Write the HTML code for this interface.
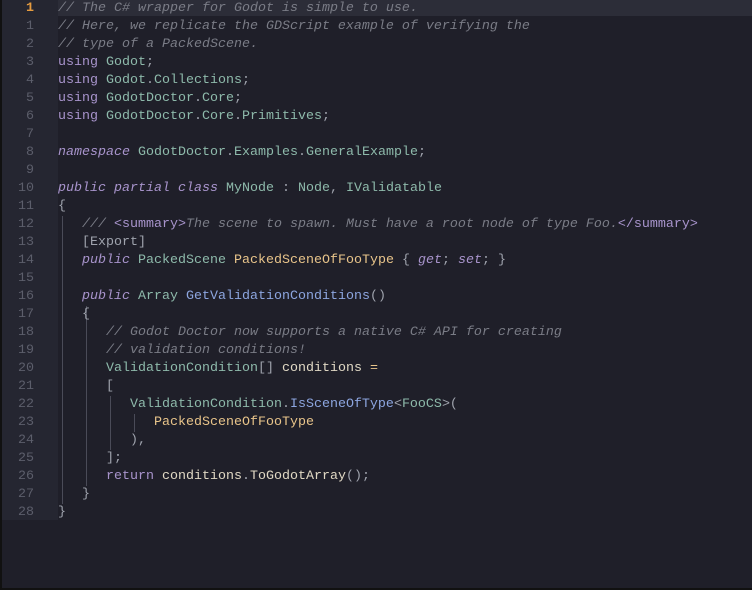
<!DOCTYPE html>
<html><head><style>
body{margin:0;width:752px;height:590px;background:#1e1f28;overflow:hidden;position:relative;font-family:"Liberation Mono",monospace;font-size:13.33px}
#frame{position:absolute;left:0;top:0;width:750px;height:588px;border-left:2px solid #111;border-bottom:2px solid #111;background:#1f1f29}
#gut{position:absolute;left:2px;top:0;width:56px;height:520px;background:#252631}
#hl{position:absolute;left:58px;top:0;width:694px;height:16px;background:#2c2d38}
.n{position:absolute;left:0;width:34px;text-align:right;color:#5c5e6b;height:18px;line-height:18px}
.n.c{color:#e59b3f;font-weight:bold}
.l{position:absolute;left:58px;white-space:pre;height:18px;line-height:18px;color:#9fa3ad}
.g{position:absolute;width:1px;background:#4a4b58}
.cm{color:#7a7c86;font-style:italic}
.kw{color:#a894cc;font-style:italic}
.ku{color:#a894cc}
.ty{color:#8ebaab}
.pr{color:#e8c48a}
.fn{color:#8da6e0}
.vr{color:#e0d8c4}
.tg{color:#a894cc}
</style></head><body>
<div id="frame"></div>
<div id="gut"></div>
<div id="hl"></div>
<div class="g" style="left:62px;top:216px;height:288px"></div>
<div class="g" style="left:86px;top:306px;height:180px"></div>
<div class="g" style="left:110px;top:396px;height:54px"></div>
<div class="g" style="left:134px;top:414px;height:18px"></div>
<div id="c"></div>
<script>
const L=[
'<span class="cm">// The C# wrapper for Godot is simple to use.</span>',
'<span class="cm">// Here, we replicate the GDScript example of verifying the</span>',
'<span class="cm">// type of a PackedScene.</span>',
'<span class="ku">using</span> <span class="ty">Godot</span>;',
'<span class="ku">using</span> <span class="ty">Godot</span>.<span class="ty">Collections</span>;',
'<span class="ku">using</span> <span class="ty">GodotDoctor</span>.<span class="ty">Core</span>;',
'<span class="ku">using</span> <span class="ty">GodotDoctor</span>.<span class="ty">Core</span>.<span class="ty">Primitives</span>;',
'',
'<span class="kw">namespace</span> <span class="ty">GodotDoctor</span>.<span class="ty">Examples</span>.<span class="ty">GeneralExample</span>;',
'',
'<span class="kw">public partial class</span> <span class="ty">MyNode</span> : <span class="ty">Node</span>, <span class="ty">IValidatable</span>',
'{',
'   <span class="cm">///</span> <span class="tg">&lt;summary&gt;</span><span class="cm">The scene to spawn. Must have a root node of type Foo.</span><span class="tg">&lt;/summary&gt;</span>',
'   [Export]',
'   <span class="kw">public</span> <span class="ty">PackedScene</span> <span class="pr">PackedSceneOfFooType</span> { <span class="kw">get</span>; <span class="kw">set</span>; }',
'',
'   <span class="kw">public</span> <span class="ty">Array</span> <span class="fn">GetValidationConditions</span>()',
'   {',
'      <span class="cm">// Godot Doctor now supports a native C# API for creating</span>',
'      <span class="cm">// validation conditions!</span>',
'      <span class="ty">ValidationCondition</span>[] <span class="vr">conditions</span> <span class="pr">=</span>',
'      [',
'         <span class="ty">ValidationCondition</span>.<span class="fn">IsSceneOfType</span>&lt;<span class="ty">FooCS</span>&gt;(',
'            <span class="pr">PackedSceneOfFooType</span>',
'         ),',
'      ];',
'      <span class="ku">return</span> <span class="vr">conditions</span>.<span class="vr">ToGodotArray</span>();',
'   }',
'}'];
let h='';
L.forEach((s,i)=>{const t=i*18;
h+=`<div class="n${i==0?' c':''}" style="top:${t}px">${i==0?1:i}</div><div class="l" style="top:${t}px">${s}</div>`;});
document.getElementById('c').innerHTML=h;
</script>
</body></html>
